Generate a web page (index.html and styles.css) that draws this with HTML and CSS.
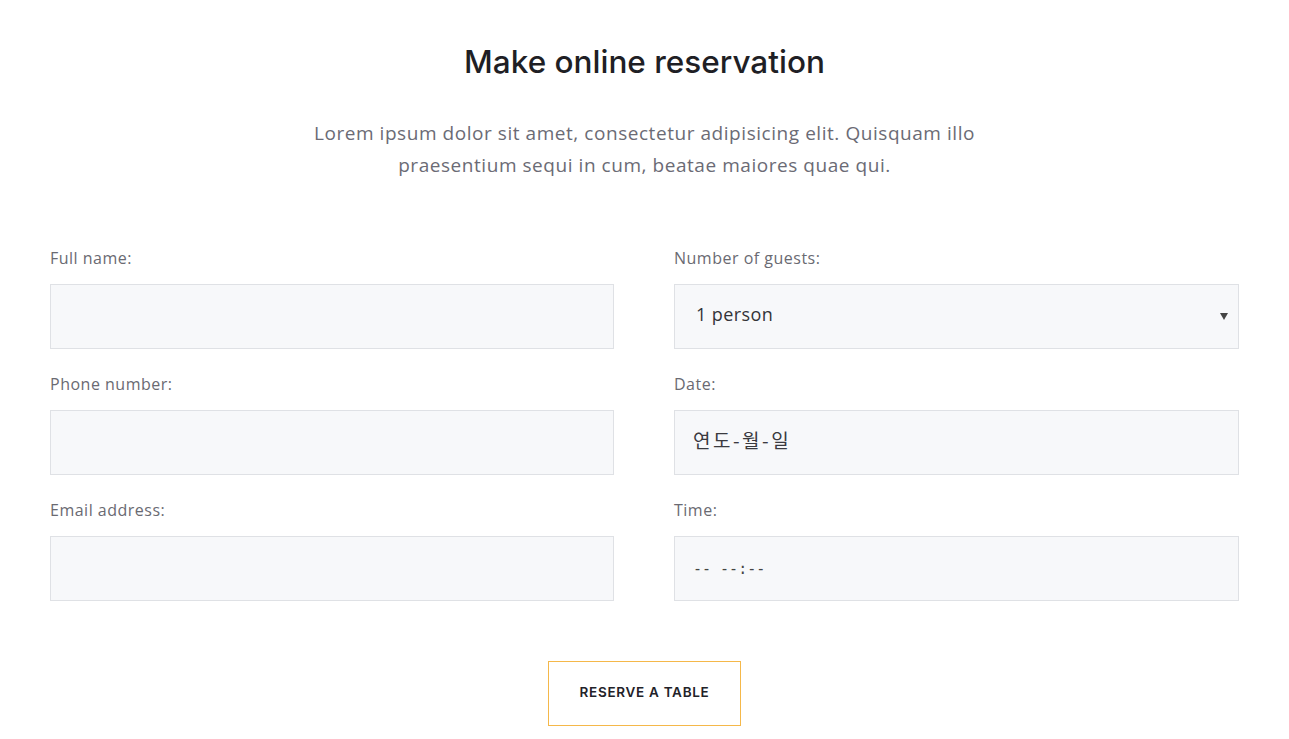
FILE: index.html
```html
<!DOCTYPE html>
<html lang="en">
<head>
<meta charset="utf-8">
<title>Make online reservation</title>
<link rel="stylesheet" href="styles.css">
</head>
<body>
<section class="reservation">
  <h1 class="title">Make online reservation</h1>
  <p class="intro">Lorem ipsum dolor sit amet, consectetur adipisicing elit. Quisquam illo praesentium sequi in cum, beatae maiores quae qui.</p>
  <form class="form">
    <div class="col">
      <div class="group">
        <label class="label">Full name:</label>
        <div class="field"></div>
      </div>
      <div class="group">
        <label class="label">Phone number:</label>
        <div class="field"></div>
      </div>
      <div class="group">
        <label class="label">Email address:</label>
        <div class="field"></div>
      </div>
    </div>
    <div class="col">
      <div class="group">
        <label class="label">Number of guests:</label>
        <div class="field select"><span class="value">1 person</span><span class="arrow"></span></div>
      </div>
      <div class="group">
        <label class="label">Date:</label>
        <div class="field"><span class="value ko">연도-월-일</span></div>
      </div>
      <div class="group">
        <label class="label">Time:</label>
        <div class="field"><span class="value mono">-- --:--</span></div>
      </div>
    </div>
  </form>
  <div class="actions">
    <button class="btn" type="button">RESERVE A TABLE</button>
  </div>
</section>
</body>
</html>
```
FILE: styles.css
```css
* { box-sizing: border-box; }
html, body { margin: 0; padding: 0; background: #fff; }
body { font-family: "Open Sans", "Liberation Sans", sans-serif; }

.reservation {
  padding: 38px 50px 0 50px;
}
.title {
  margin: 0;
  text-align: center;
  font-family: "Inter", sans-serif;
  font-weight: 500;
  font-size: 31.5px;
  line-height: 48px;
  color: #1f1f25;
}
.intro {
  max-width: 700px;
  margin: 31px auto 0;
  text-align: center;
  font-size: 19px;
  line-height: 32px;
  letter-spacing: 0.55px;
  color: #6b6b75;
}
.form {
  display: grid;
  grid-template-columns: 564px 565px;
  column-gap: 60px;
  margin-top: 66px;
}
.group { margin-bottom: 24px; }
.label {
  display: block;
  font-size: 16px;
  line-height: 22px;
  letter-spacing: 0.5px;
  color: #6a6a72;
  margin-bottom: 15px;
}
.field {
  height: 65px;
  background: #f7f8fa;
  border: 1px solid #dfe1e5;
  display: flex;
  align-items: center;
  padding: 0 21px;
  position: relative;
}
.value {
  font-size: 18px;
  letter-spacing: 0.4px;
  color: #333338;
  position: relative;
  top: -3px;
}
.ko {
  font-family: "Noto Sans CJK KR", sans-serif;
  font-size: 19px;
  letter-spacing: 2.5px;
  color: #3a3a3f;
  margin-left: -3px;
}
.mono {
  font-family: "DejaVu Sans Mono", monospace;
  font-size: 15px;
  letter-spacing: 0;
  color: #444;
  margin-left: -3px;
  top: 0;
}
.arrow {
  position: absolute;
  right: 10px;
  top: 28px;
  width: 0;
  height: 0;
  border-left: 4px solid transparent;
  border-right: 4px solid transparent;
  border-top: 7px solid #444;
}
.actions {
  display: flex;
  justify-content: center;
  margin-top: 36px;
}
.btn {
  width: 193px;
  height: 65px;
  padding: 0 0 3px;
  background: #fff;
  border: 1px solid #f5b84a;
  font-family: "Inter", sans-serif;
  font-weight: 600;
  font-size: 13.5px;
  letter-spacing: 0.7px;
  color: #222228;
  cursor: pointer;
}
```
